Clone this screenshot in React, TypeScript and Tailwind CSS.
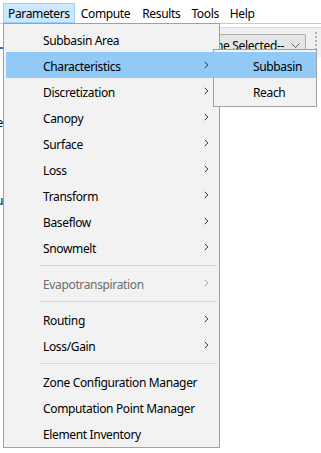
import React from "react";

const font = { fontFamily: '"Noto Sans", "Open Sans", sans-serif' };

function Chevron() {
  return (
    <svg width="5" height="8" viewBox="0 0 5 8" className="block">
      <path d="M0.8 0.8 L3.8 4 L0.8 7.2" fill="none" stroke="#333" strokeWidth="1" />
    </svg>
  );
}

type Item =
  | { kind: "item"; label: string; arrow?: boolean; active?: boolean; disabled?: boolean }
  | { kind: "sep" };

const items: Item[] = [
  { kind: "item", label: "Subbasin Area" },
  { kind: "item", label: "Characteristics", arrow: true, active: true },
  { kind: "item", label: "Discretization", arrow: true },
  { kind: "item", label: "Canopy", arrow: true },
  { kind: "item", label: "Surface", arrow: true },
  { kind: "item", label: "Loss", arrow: true },
  { kind: "item", label: "Transform", arrow: true },
  { kind: "item", label: "Baseflow", arrow: true },
  { kind: "item", label: "Snowmelt", arrow: true },
  { kind: "sep" },
  { kind: "item", label: "Evapotranspiration", arrow: true, disabled: true },
  { kind: "sep" },
  { kind: "item", label: "Routing", arrow: true },
  { kind: "item", label: "Loss/Gain", arrow: true },
  { kind: "sep" },
  { kind: "item", label: "Zone Configuration Manager" },
  { kind: "item", label: "Computation Point Manager" },
  { kind: "item", label: "Element Inventory" },
];

export default function App() {
  return (
    <div
      className="relative w-[321px] h-[453px] bg-white overflow-hidden text-[12px] tracking-[-0.35px] text-black"
      style={font}
    >
      {/* Menubar */}
      <div className="flex h-[24px] border-b border-[#c9c9c9] bg-white pl-[3px] pt-[3px]">
        <div className="h-[20px] px-[4px] pt-[2px] flex items-center border border-[#99d1ff] bg-[#cce8ff] leading-none">
          Parameters
        </div>
        <div className="h-[20px] px-[6px] pt-[2px] flex items-center leading-none">Compute</div>
        <div className="h-[20px] px-[6px] pt-[2px] flex items-center leading-none">Results</div>
        <div className="h-[20px] px-[5px] pt-[2px] flex items-center leading-none">Tools</div>
        <div className="h-[20px] px-[6px] pt-[2px] flex items-center leading-none">Help</div>
      </div>

      {/* Body */}
      <div className="flex">
        <div className="w-[3px] overflow-hidden flex flex-col">
          <div className="h-[23px]" />
          <div className="h-[2px] w-[3px] bg-[#2a6fd6]" />
          <div className="h-[67px]" />
          <div className="flex justify-end whitespace-nowrap leading-[14px]">e</div>
          <div className="h-[64px]" />
          <div className="flex justify-end whitespace-nowrap leading-[14px]">u</div>
        </div>
        <div className="flex-1 flex flex-col">
          <div className="h-[3px]" />
          <div className="h-[30px] bg-[#f0f0f0] border-t border-[#dcdcdc] flex justify-end items-start pr-[4px]">
            <div className="mt-[6px] w-[120px] h-[22px] border border-[#adadad] bg-[#e5e5e5] flex items-center justify-end pr-[4px] pt-[1px] whitespace-nowrap">
              <span className="leading-none">--None Selected--</span>
              <svg width="9" height="6" viewBox="0 0 9 6" className="ml-[7px] mr-[1px] mt-[1px]">
                <path d="M0.5 0.5 L4.5 4.5 L8.5 0.5" fill="none" stroke="#606060" strokeWidth="1" />
              </svg>
            </div>
            <div className="ml-[9px] mt-[4px] flex flex-col gap-[2px]">
              {[0, 1, 2, 3, 4].map((i) => (
                <div key={i} className="w-[2px] h-[2px] bg-[#b0b0b0]" />
              ))}
            </div>
          </div>
        </div>
      </div>

      {/* Main dropdown */}
      <div className="absolute left-[3px] top-[23px] w-[217px] border border-[#a0a0a0] bg-[#f2f2f2] pt-[2px] pb-[1px]">
        {items.map((it, i) =>
          it.kind === "sep" ? (
            <div key={i} className="h-[10px] flex items-center pl-[36px] pr-[2px]">
              <div className="h-[1px] w-full bg-[#d7d7d7]" />
            </div>
          ) : (
            <div
              key={i}
              className={
                "h-[26px] ml-[2px] mr-[3px] flex items-center pl-[37px] pr-[7px] leading-none " +
                (it.active ? "bg-[#91c9f7]" : "") +
                (it.disabled ? " text-[#6d6d6d]" : "")
              }
            >
              <span className="flex-1 whitespace-nowrap pt-[3px]">{it.label}</span>
              {it.arrow && (
                <span className={it.disabled ? "opacity-40" : ""}>
                  <Chevron />
                </span>
              )}
            </div>
          )
        )}
      </div>

      {/* Submenu */}
      <div className="absolute left-[213px] top-[49px] w-[104px] border border-[#a0a0a0] bg-[#f2f2f2] pt-[2px] pb-[2px]">
        <div className="h-[26px] -ml-[1px] flex items-center pl-[40px] pt-[3px] bg-[#91c9f7] leading-none">
          Subbasin
        </div>
        <div className="h-[26px] flex items-center pl-[39px] pt-[3px] leading-none">Reach</div>
      </div>
    </div>
  );
}
